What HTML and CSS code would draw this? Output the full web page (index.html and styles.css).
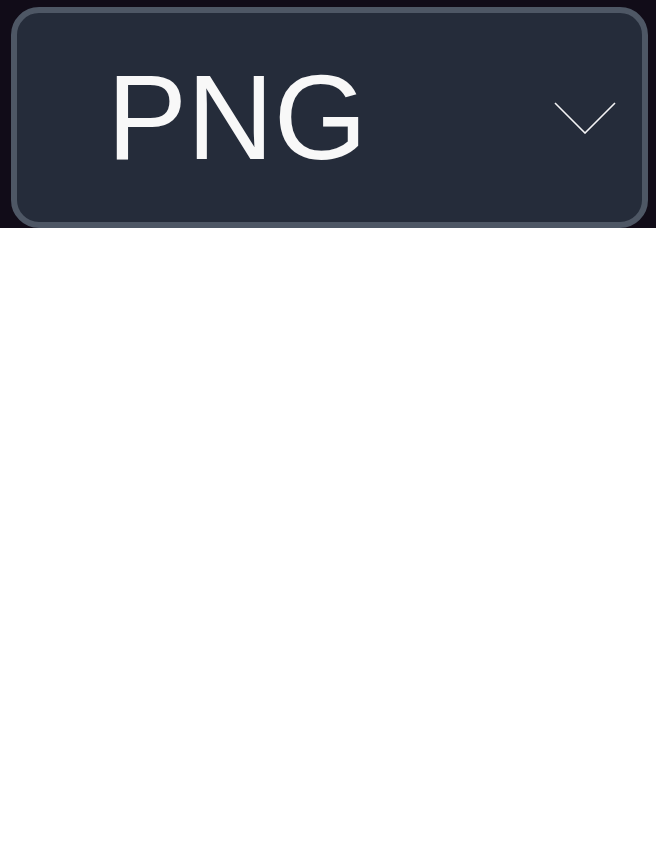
FILE: index.html
```html
<!DOCTYPE html>
<html>
<head>
<meta charset="utf-8">
<link rel="stylesheet" href="styles.css">
</head>
<body>
<div class="band">
  <div class="select">
    <span class="value">PNG</span>
    <svg class="chevron" width="62" height="32" viewBox="0 0 62 32">
      <polyline points="1,1 31,31 61,1" fill="none" stroke="#f4f4f5" stroke-width="1.6"/>
    </svg>
  </div>
</div>
</body>
</html>
```
FILE: styles.css
```css
html, body {
  margin: 0;
  padding: 0;
  background: #ffffff;
}
.band {
  background: #110c18;
  padding: 7px 8px 0 11px;
}
.select {
  box-sizing: border-box;
  height: 221px;
  border: 6px solid #4e5765;
  border-radius: 28px;
  background: #252c3a;
  display: flex;
  align-items: center;
  justify-content: space-between;
  padding: 0 26px 0 90px;
}
.value {
  font-family: "Liberation Sans", Arial, sans-serif;
  font-size: 120px;
  line-height: 1;
  color: #f8f8f8;
  margin-top: -2px;
}
.chevron {
  display: block;
  margin-top: 0;
}
```
